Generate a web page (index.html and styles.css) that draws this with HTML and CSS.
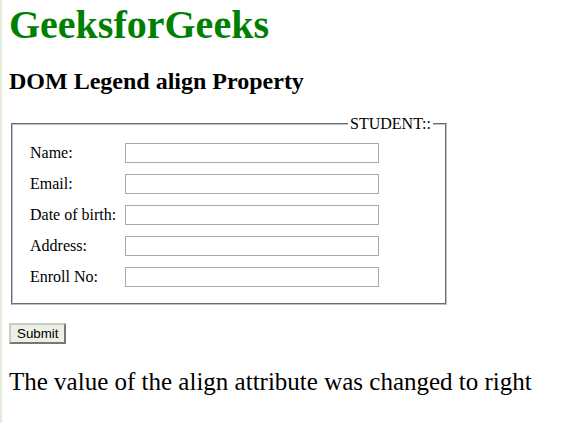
FILE: index.html
```html
<!DOCTYPE html>
<html>
<head>
<meta charset="utf-8">
<title>DOM Legend align Property</title>
<link rel="stylesheet" href="styles.css">
</head>
<body>
<h1 class="brand">GeeksforGeeks</h1>
<h2 class="title">DOM Legend align Property</h2>
<form class="form">
  <fieldset class="box">
    <legend class="legend">STUDENT::</legend>
    <div class="fields">
      <label class="label">Name:</label><input class="field" type="text">
      <label class="label">Email:</label><input class="field" type="text">
      <label class="label">Date of birth:</label><input class="field" type="text">
      <label class="label">Address:</label><input class="field" type="text">
      <label class="label">Enroll No:</label><input class="field" type="text">
    </div>
  </fieldset>
  <div class="actions"><button class="submit" type="button">Submit</button></div>
</form>
<p class="result">The value of the align attribute was changed to right</p>
</body>
</html>
```

FILE: styles.css
```css
html {
  background: linear-gradient(90deg, #e3ecda 0, #e3ecda 2px, #ffffff 2px);
}
body {
  margin: 0 8px 0 9px;
  font-family: "Liberation Serif", "Times New Roman", serif;
  font-size: 16px;
  color: #000;
}
.brand {
  margin: 1px 0 0;
  font-size: 40px;
  font-weight: bold;
  color: #008000;
}
.title {
  margin: 20px 0 20px;
  font-size: 24px;
  font-weight: bold;
}
.form {
  margin: 0;
}
.box {
  box-sizing: border-box;
  width: 436px;
  margin: 0 0 0 2px;
  padding: 10px 12px 16px 17px;
  border: 2px groove #c0c0c0;
}
.legend {
  margin-left: auto;
  margin-right: 0;
  padding: 0 2px;
  font-size: 16px;
}
.fields {
  display: grid;
  grid-template-columns: 95px 254px;
  row-gap: 11px;
  align-items: center;
}
.label {
  font-size: 16px;
}
.field {
  box-sizing: border-box;
  width: 254px;
  height: 20px;
  margin: 0;
  padding: 0 2px;
  border: 1px solid #a9a9a9;
  background: #fff;
}
.actions {
  margin-top: 18px;
}
.submit {
  margin: 0;
  padding: 1px 6px;
  font-family: "Liberation Sans", Arial, sans-serif;
  font-size: 13.333px;
  color: #000;
  background: #ecf0e5;
  border: 2px outset #c8cdc0;
  line-height: normal;
}
.result {
  margin: 24px 0 0;
  font-size: 25px;
}
```
